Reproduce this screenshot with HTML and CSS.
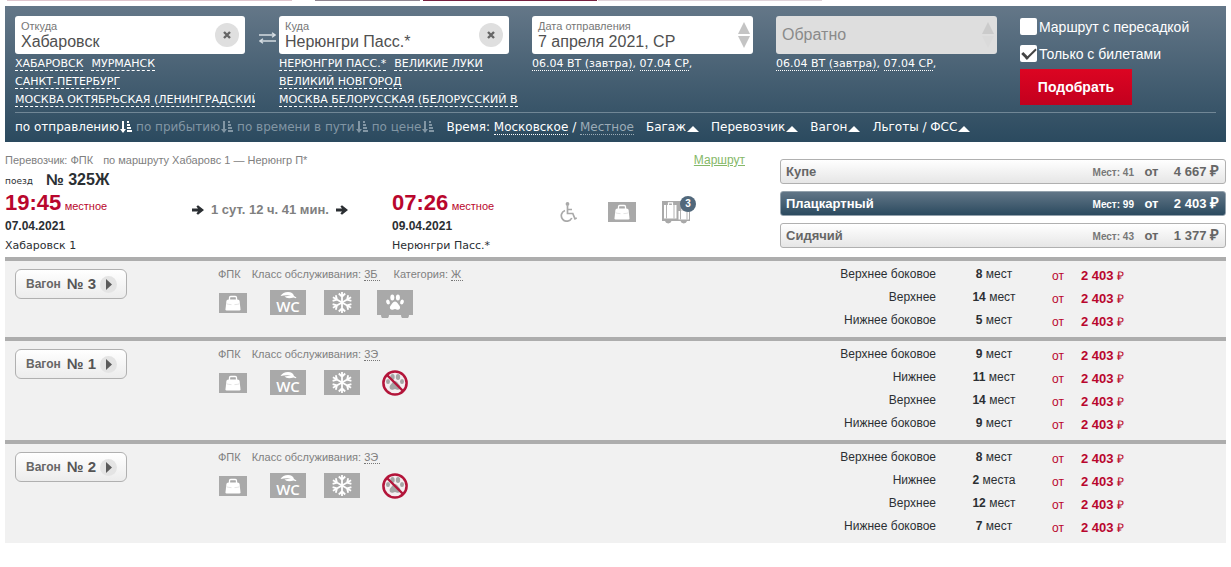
FILE: index.html
```
<!DOCTYPE html>
<html lang="ru">
<head>
<meta charset="utf-8">
<title>Хабаровск — Нерюнгри Пасс.</title>
<link rel="stylesheet" href="styles.css">
</head>
<body>
<svg class="sprite" aria-hidden="true">
  <symbol id="i-sort" viewBox="0 0 12 12"><path d="M2 0h2v8h2L3 12 0 8h2zM7 0h2v2H7zM7 3h3v2H7zM7 6h4v2H7zM7 9h5v2H7z" fill="currentColor"/></symbol>
  <symbol id="i-arrow" viewBox="0 0 12 10"><path d="M0 3.600h6L4.400 1.600 6 .2 12 5 6 9.800 4.400 8.400 6 6.400H0z" fill="currentColor"/></symbol>
  <symbol id="i-bag" viewBox="0 0 28 20"><path d="M0 0h28v20H0z" fill="#a9a9a9"/><path d="M10.500 7V4.700q0-1.200 1.200-1.200h4.600q1.200 0 1.200 1.200V7" fill="none" stroke="#fff" stroke-width="1.300"/><path d="M9.300 6.500h9.400q1.600 0 1.900 1.500l.9 8.300q.1 1.200-1.100 1.200H7.600q-1.200 0-1.100-1.200L7.400 8q.3-1.500 1.900-1.500z" fill="#fff"/><path d="M7.500 10.800q2 .8 5 .8m8-.8q-2 .8-5 .8" fill="none" stroke="#d2d2d2" stroke-width=".6"/></symbol>
  <symbol id="i-wc" viewBox="0 0 36 25"><path d="M0 0h36v25H0z" fill="#a9a9a9"/><path d="M10.500 6Q13 2 18 2q5 0 6 4l2.500 1.500-.8.800-2-.8Q17 9.200 14.500 6.500L21 5.500q-5-.8-10.500.5z" fill="#fff"/></symbol>
  <symbol id="i-snow" viewBox="0 0 36 25"><path d="M0 0h36v25H0z" fill="#a9a9a9"/><g stroke="#fff" stroke-width="1.800" fill="none"><path id="flake" d="M18 2v21M14.800 3.500 18 6.700l3.200-3.200M14.800 21.500l3.200-3.200 3.200 3.200"/><use href="#flake" transform="rotate(60 18 12.500)"/><use href="#flake" transform="rotate(120 18 12.500)"/></g></symbol>
  <symbol id="i-paw" viewBox="0 0 36 28"><path d="M0 0h36v25h-4a4 4 0 0 1-8 0H12a4 4 0 0 1-8 0H0z" fill="#a9a9a9"/><g fill="#fff"><ellipse cx="15.300" cy="7.500" rx="2" ry="2.900"/><ellipse cx="20.900" cy="7.500" rx="2" ry="2.900"/><ellipse cx="11" cy="12" rx="1.800" ry="2.500" transform="rotate(-20 11 12)"/><ellipse cx="25" cy="12" rx="1.800" ry="2.500" transform="rotate(20 25 12)"/><path d="M18 11.500c2.200 0 3 2.500 4.300 4 1.500 1.600.8 4.300-1.300 4.200-1.200 0-1.800-.8-3-.8s-1.800.8-3 .8c-2.100.1-2.800-2.600-1.300-4.200 1.300-1.500 2.100-4 4.300-4z"/></g></symbol>
  <symbol id="i-nopets" viewBox="0 0 26 26"><circle cx="13" cy="13" r="11.800" fill="#f4eef0"/><g fill="#a5a5a5"><ellipse cx="10.500" cy="7" rx="2.200" ry="3"/><ellipse cx="16" cy="7" rx="2.200" ry="3"/><ellipse cx="6" cy="11.500" rx="2" ry="2.600"/><ellipse cx="20" cy="11.500" rx="2" ry="2.600"/><path d="M13 11c2.200 0 3 2.500 4.600 4 1.500 1.600.8 4.800-1.600 4.700-1.200 0-1.800-.8-3-.8s-1.800.8-3 .8c-2.400.1-3.100-3.100-1.600-4.700C10 13.500 10.800 11 13 11z"/></g><path d="m5 5 16 16" stroke="#b3153a" stroke-width="2.400"/><circle cx="13" cy="13" r="11.600" fill="none" stroke="#b3153a" stroke-width="2.500"/></symbol>
</svg>

<div class="tabs"><i class="tab-a"></i><i class="tab-b"></i><i class="tab-c"></i><i class="tab-d"></i></div>

<main class="page">
<form class="search">
  <div class="search-grid">
    <div class="place from">
      <div class="field">
        <label for="from">Откуда</label>
        <input id="from" type="text" value="Хабаровск">
        <button class="clear" type="button" aria-label="Очистить"><svg width="8" height="8" viewBox="0 0 8 8"><path d="m1 1 6 6M7 1 1 7" stroke="#666" stroke-width="2.400"/></svg></button>
      </div>
      <div class="hints"><a href="#">ХАБАРОВСК</a><a href="#">МУРМАНСК</a><br><a href="#">САНКТ-ПЕТЕРБУРГ</a><br><a href="#">МОСКВА ОКТЯБРЬСКАЯ (ЛЕНИНГРАДСКИЙ</a></div>
    </div>
    <button class="swap" type="button" aria-label="Поменять местами"><svg width="17" height="12" viewBox="0 0 17 12"><path d="M0 3h15M13 .8 16 3l-3 2.200M17 9H2m2-2.200L1 9l3 2.200" fill="none" stroke="#d3dbe1" stroke-width="1.400"/></svg></button>
    <div class="place to">
      <div class="field">
        <label for="to">Куда</label>
        <input id="to" type="text" value="Нерюнгри Пасс.*">
        <button class="clear" type="button" aria-label="Очистить"><svg width="8" height="8" viewBox="0 0 8 8"><path d="m1 1 6 6M7 1 1 7" stroke="#666" stroke-width="2.400"/></svg></button>
      </div>
      <div class="hints"><a href="#">НЕРЮНГРИ ПАСС.*</a><a href="#">ВЕЛИКИЕ ЛУКИ</a><br><a href="#">ВЕЛИКИЙ НОВГОРОД</a><br><a href="#">МОСКВА БЕЛОРУССКАЯ (БЕЛОРУССКИЙ В</a></div>
    </div>
    <div class="date">
      <div class="field">
        <label for="dep">Дата отправления</label>
        <input id="dep" type="text" value="7 апреля 2021, СР">
        <span class="spin"><button type="button" aria-label="Следующий день"><svg width="12" height="12" viewBox="0 0 12 12"><path d="M6 0l6 12H0z" fill="#c4c4c4"/></svg></button><button type="button" aria-label="Предыдущий день"><svg width="12" height="12" viewBox="0 0 12 12"><path d="M0 0h12L6 12z" fill="#c4c4c4"/></svg></button></span>
      </div>
      <div class="hints near"><a href="#">06.04 ВТ (завтра)</a>, <a href="#">07.04 СР</a>,</div>
    </div>
    <div class="date">
      <div class="field off">
        <input type="text" aria-label="Обратно" placeholder="Обратно">
        <span class="spin"><button type="button" aria-label="Следующий день"><svg width="12" height="12" viewBox="0 0 12 12"><path d="M6 0l6 12H0z" fill="#cbcbcb"/></svg></button><button type="button" aria-label="Предыдущий день"><svg width="12" height="12" viewBox="0 0 12 12"><path d="M0 0h12L6 12z" fill="#dadada"/></svg></button></span>
      </div>
      <div class="hints near"><a href="#">06.04 ВТ (завтра)</a>, <a href="#">07.04 СР</a>,</div>
    </div>
    <div class="options">
      <label class="check"><input type="checkbox"> Маршрут с пересадкой</label>
      <label class="check"><input type="checkbox" checked> Только с билетами</label>
      <button class="submit" type="submit">Подобрать</button>
    </div>
  </div>
  <div class="filters">
    <div class="sorts">
      <button type="button" class="sort active">по отправлению<svg width="12" height="12"><use href="#i-sort"/></svg></button>
      <button type="button" class="sort">по прибытию<svg width="12" height="12"><use href="#i-sort"/></svg></button>
      <button type="button" class="sort">по времени в пути<svg width="12" height="12"><use href="#i-sort"/></svg></button>
      <button type="button" class="sort">по цене<svg width="12" height="12"><use href="#i-sort"/></svg></button>
    </div>
    <div class="zone">Время: <a href="#">Московское</a> / <a href="#" class="dim">Местное</a></div>
    <button type="button" class="more">Багаж</button>
    <button type="button" class="more">Перевозчик</button>
    <button type="button" class="more">Вагон</button>
    <button type="button" class="more">Льготы / ФСС</button>
  </div>
</form>

<section class="train">
  <div class="trip">
    <div class="carrier"><span>Перевозчик: ФПК</span><span>по маршруту Хабаровс 1 — Нерюнгр П*</span><a href="#" class="route">Маршрут</a></div>
    <div class="number"><small>поезд</small><b>№ 325Ж</b></div>
    <div class="legs">
      <div class="leg">
        <div><b class="time">19:45</b> <span class="local">местное</span></div>
        <div class="day">07.04.2021</div>
        <div class="station">Хабаровск 1</div>
      </div>
      <div class="duration"><svg width="12" height="10"><use href="#i-arrow"/></svg><b>1 сут. 12 ч. 41 мин.</b><svg width="12" height="10"><use href="#i-arrow"/></svg></div>
      <div class="leg">
        <div><b class="time">07:26</b> <span class="local">местное</span></div>
        <div class="day">09.04.2021</div>
        <div class="station">Нерюнгри Пасс.*</div>
      </div>
      <div class="services">
        <svg width="17" height="20" viewBox="0 0 17 20"><circle cx="7.500" cy="2" r="1.900" fill="#a9a9a9"/><path d="M7.500 4v7.500h5.300l2.200 5.300 1.800-.8M7.500 7.500H12M5 8.500a5.500 5.500 0 1 0 6.800 7.500" fill="none" stroke="#a9a9a9" stroke-width="1.700"/></svg>
        <svg width="28" height="20"><use href="#i-bag"/></svg>
        <span class="luggage"><svg width="28" height="23" viewBox="0 0 28 23"><path d="M0 0h28v20h-3a3.300 3 0 0 1-6.500 0h-9a3.300 3 0 0 1-6.500 0H0z" fill="#a9a9a9"/><path d="M2 4h12.500v13.500H2zM16.500 10H27v8.500H16.500z" fill="#fff"/><path d="M4.500 4v13.500M12 4v13.500M18.500 10v8.500M25 10v8.500" stroke="#b3b3b3"/><path d="M6.500 4V1.800h4V4M20 10V8.500h3.500V10" fill="none" stroke="#fff" stroke-width="1.200"/></svg><span class="badge">3</span></span>
      </div>
    </div>
  </div>
  <div class="classes">
    <button type="button" class="class"><b>Купе</b><small>Мест: 41</small><span class="ot">от</span><b class="sum">4 667 <i>₽</i></b></button>
    <button type="button" class="class chosen"><b>Плацкартный</b><small>Мест: 99</small><span class="ot">от</span><b class="sum">2 403 <i>₽</i></b></button>
    <button type="button" class="class"><b>Сидячий</b><small>Мест: 43</small><span class="ot">от</span><b class="sum">1 377 <i>₽</i></b></button>
  </div>
</section>

<section class="car">
  <button type="button" class="pick">Вагон <b>№ 3</b><i><svg width="6" height="11" viewBox="0 0 6 11"><path d="M0 0l6 5.500L0 11z" fill="#5b5b5b"/></svg></i></button>
  <div class="about">
    <p><span>ФПК</span><span>Класс обслуживания: <abbr>3Б</abbr></span><span>Категория: <abbr>Ж</abbr></span></p>
    <div class="perks"><svg width="28" height="20"><use href="#i-bag"/></svg><svg width="36" height="25"><use href="#i-wc"/><text x="18" y="22" text-anchor="middle" class="wc">WC</text></svg><svg width="36" height="25"><use href="#i-snow"/></svg><svg class="paw" width="36" height="28"><use href="#i-paw"/></svg></div>
  </div>
  <table class="seats">
    <tr><td>Верхнее боковое</td><td><b>8</b> мест</td><td>от</td><td><b>2 403</b> ₽</td></tr>
    <tr><td>Верхнее</td><td><b>14</b> мест</td><td>от</td><td><b>2 403</b> ₽</td></tr>
    <tr><td>Нижнее боковое</td><td><b>5</b> мест</td><td>от</td><td><b>2 403</b> ₽</td></tr>
  </table>
</section>

<section class="car">
  <button type="button" class="pick">Вагон <b>№ 1</b><i><svg width="6" height="11" viewBox="0 0 6 11"><path d="M0 0l6 5.500L0 11z" fill="#5b5b5b"/></svg></i></button>
  <div class="about">
    <p><span>ФПК</span><span>Класс обслуживания: <abbr>3Э</abbr></span></p>
    <div class="perks"><svg width="28" height="20"><use href="#i-bag"/></svg><svg width="36" height="25"><use href="#i-wc"/><text x="18" y="22" text-anchor="middle" class="wc">WC</text></svg><svg width="36" height="25"><use href="#i-snow"/></svg><svg class="nopets" width="26" height="26"><use href="#i-nopets"/></svg></div>
  </div>
  <table class="seats">
    <tr><td>Верхнее боковое</td><td><b>9</b> мест</td><td>от</td><td><b>2 403</b> ₽</td></tr>
    <tr><td>Нижнее</td><td><b>11</b> мест</td><td>от</td><td><b>2 403</b> ₽</td></tr>
    <tr><td>Верхнее</td><td><b>14</b> мест</td><td>от</td><td><b>2 403</b> ₽</td></tr>
    <tr><td>Нижнее боковое</td><td><b>9</b> мест</td><td>от</td><td><b>2 403</b> ₽</td></tr>
  </table>
</section>

<section class="car">
  <button type="button" class="pick">Вагон <b>№ 2</b><i><svg width="6" height="11" viewBox="0 0 6 11"><path d="M0 0l6 5.500L0 11z" fill="#5b5b5b"/></svg></i></button>
  <div class="about">
    <p><span>ФПК</span><span>Класс обслуживания: <abbr>3Э</abbr></span></p>
    <div class="perks"><svg width="28" height="20"><use href="#i-bag"/></svg><svg width="36" height="25"><use href="#i-wc"/><text x="18" y="22" text-anchor="middle" class="wc">WC</text></svg><svg width="36" height="25"><use href="#i-snow"/></svg><svg class="nopets" width="26" height="26"><use href="#i-nopets"/></svg></div>
  </div>
  <table class="seats">
    <tr><td>Верхнее боковое</td><td><b>8</b> мест</td><td>от</td><td><b>2 403</b> ₽</td></tr>
    <tr><td>Нижнее</td><td><b>2</b> места</td><td>от</td><td><b>2 403</b> ₽</td></tr>
    <tr><td>Верхнее</td><td><b>12</b> мест</td><td>от</td><td><b>2 403</b> ₽</td></tr>
    <tr><td>Нижнее боковое</td><td><b>7</b> мест</td><td>от</td><td><b>2 403</b> ₽</td></tr>
  </table>
</section>
</main>
</body>
</html>
```

FILE: styles.css
```
* { box-sizing: border-box; }
body { margin: 0; background: #fff; color: #2b2f33; font: 12px/16px "Liberation Sans", Arial, sans-serif; }
button { font: inherit; color: inherit; background: none; border: 0; padding: 0; margin: 0; cursor: pointer; }
svg { display: block; flex: none; }
a { color: inherit; }
.sprite { display: none; }
.wc { font: 600 15px "Open Sans", sans-serif; fill: #fff; }

.tabs { display: grid; grid-template-columns: 285fr 23fr 105fr 3fr 174fr 1fr 224fr 409fr; padding-left: 7px; height: 1px; }
.tab-a { background: #dfc5cd; }
.tab-b { background: #8f8590; grid-column: 3; }
.tab-c { background: #75203f; grid-column: 5; }
.tab-d { background: #e0d3d9; grid-column: 7; }
.page { padding: 5px 5px 0; }

.search { background: linear-gradient(#647788, #2b4a5f); color: #fff; padding: 10px 10px 0; }
.search-grid { display: grid; grid-template-columns: 240fr 24fr 253fr 244fr 244fr 196fr; min-height: 96px; align-items: start; }
.place, .date { min-width: 0; }
.field { position: relative; height: 38px; margin-right: 10px; padding: 3px 6px; background: #fff; border-radius: 3px; color: #555; }
.to .field, .date .field { margin-right: 23px; }
.field label { display: block; font-size: 11px; line-height: 14px; color: #777; }
.field input { display: block; width: 100%; border: 0; padding: 0; background: none; font: 16px/18px "Liberation Sans", Arial, sans-serif; height: 18px; color: #505050; outline: 0; }
.field input::placeholder { color: #8a8a8a; opacity: 1; }
.field.off { background: #dedede; padding-top: 10px; }
.clear { position: absolute; right: 6px; top: 7px; width: 24px; height: 24px; border-radius: 50%; background: #dfdfdf; display: grid; place-items: center; }
.spin { position: absolute; right: 3px; top: 6px; display: grid; gap: 2px; }
.swap { justify-self: center; padding-top: 16px; }
.hints { overflow: hidden; white-space: nowrap; font: 11px/18px "DejaVu Sans", Verdana, sans-serif; padding-top: 1px; }
.to .hints { margin-right: 13px; }
.hints a { text-decoration: none; border-bottom: 1px dashed #fff; margin-right: 8px; }
.hints.near a { border-bottom-style: dotted; margin-right: 0; }
.options { display: flex; flex-direction: column; align-items: flex-start; }
.check { display: flex; align-items: center; gap: 2px; height: 21px; margin-bottom: 6px; font-size: 14px; white-space: nowrap; }
.check input { appearance: none; width: 17px; height: 17px; margin: 0; background: #fff; border-radius: 2px; display: grid; place-items: center; }
.check input:checked::after { content: ""; width: 11px; height: 6px; border: solid #444; border-width: 0 0 2px 3px; transform: translateY(-2px) rotate(-45deg); }
.submit { width: 112px; height: 36px; margin-top: -1px; background: linear-gradient(#dc0522, #c3001e); font-weight: bold; font-size: 14px; }
.filters { border-top: 1px solid #718796; height: 30px; padding-bottom: 1px; display: flex; align-items: center; gap: 12px; white-space: nowrap; font: 12px/16px "DejaVu Sans", Verdana, sans-serif; }
.sorts { display: flex; gap: 4px; }
.sort { display: flex; align-items: center; gap: 1px; color: #8296a4; }
.sort.active { color: #fff; }
.zone a { text-decoration: none; border-bottom: 1px dotted; }
.zone .dim { color: #9cacb7; }
.more { display: flex; align-items: center; gap: 1px; }
.more::after { content: ""; border: solid transparent; border-width: 0 6px 6px; border-bottom-color: #fff; margin-top: 3px; }

.train { display: grid; grid-template-columns: 775fr 446fr; border-bottom: 4px solid #adadad; padding-bottom: 3px; }
.carrier { display: flex; gap: 10px; padding: 10px 35px 0 0; font-size: 11px; color: #808080; }
.route { margin-left: auto; font-size: 12px; color: #85b868; }
.number { display: flex; align-items: center; gap: 13px; height: 23px; }
.number small { font: 9px/14px "DejaVu Sans", Verdana, sans-serif; padding-top: 3px; }
.number b { font-size: 16px; }
.legs { display: grid; grid-template-columns: 187fr 200fr 168fr 220fr; }
.time { font-size: 22px; line-height: 24px; color: #b9062d; }
.local { font-size: 11px; color: #b9062d; }
.day { font-weight: bold; line-height: 22px; }
.station { font: 11px/17px "DejaVu Sans", Verdana, sans-serif; }
.duration { display: flex; align-items: center; gap: 7px; height: 38px; white-space: nowrap; }
.duration b { font-size: 13px; color: #808080; }
.services { display: flex; align-items: center; gap: 31px; height: 42px; }
.luggage { position: relative; margin-left: -5px; }
.badge { position: absolute; right: -6px; top: -5px; width: 16px; height: 16px; border-radius: 50%; background: #51687b; color: #fff; font: bold 10px/16px "Liberation Sans", Arial, sans-serif; text-align: center; }
.classes { padding-top: 17px; display: grid; gap: 7px; align-content: start; }
.class { display: grid; grid-template-columns: 1fr auto 35px 50px; align-items: center; height: 25px; padding: 0 6px 0 5px; border: 1px solid #b0b0b0; border-radius: 3px; background: linear-gradient(#fff, #e6e6e6); color: #666; text-align: left; font-size: 13px; font-weight: bold; }
.class small { font-size: 10px; color: #777; padding-top: 2px; }
.class .ot { text-align: center; }
.class .sum { text-align: right; white-space: nowrap; }
.class i { font: bold 15px/16px "Liberation Sans", Arial, sans-serif; }
.class.chosen { background: linear-gradient(#627687, #2b4a5f); border-color: #93a1ac; color: #fff; }
.chosen small { color: #fff; }

.car { display: grid; grid-template-columns: 203fr 600fr 408fr; align-items: start; background: #f1f1f1; padding: 2px 0 5px 10px; }
.car + .car { border-top: 4px solid #adadad; }
.pick { justify-self: start; display: flex; align-items: center; width: 112px; height: 30px; margin-top: 6px; padding: 0 9px 0 10px; border: 1px solid #b0b0b0; border-radius: 6px; background: linear-gradient(#fff, #ececec); color: #666; font-size: 12px; font-weight: bold; }
.pick b { font-size: 15px; margin-left: 6px; color: #555; }
.pick i { display: grid; place-items: center; width: 17px; height: 17px; margin-left: auto; border-radius: 50%; background: #e4e4e4; }
.about { color: #808080; font-size: 11px; }
.about p { display: flex; margin: 3px 0 0; gap: 11px; }
.about p span + span + span { margin-left: 3px; }
.about abbr { border-bottom: 1px dotted #777; padding-right: 2px; }
.perks { display: grid; grid-template-columns: 33px 36px 36px 36px; column-gap: 18px; height: 28px; margin-top: 8px; padding-left: 1px; align-items: start; }
.perks svg:first-child { margin-top: 3px; }
.perks .paw { margin-left: -1px; }
.perks .nopets { margin-left: 4px; }
.seats { border-collapse: collapse; justify-self: start; white-space: nowrap; }
.seats td { height: 23px; padding: 0 0 1px; }
.seats td:nth-child(1) { width: 118px; text-align: right; }
.seats td:nth-child(2) { width: 116px; text-align: center; }
.seats td:nth-child(3) { width: 29px; color: #b9062d; padding-top: 3px; }
.seats td:nth-child(4) { color: #b9062d; padding-top: 3px; }
.seats td:nth-child(4) b { font-size: 13px; }
```
